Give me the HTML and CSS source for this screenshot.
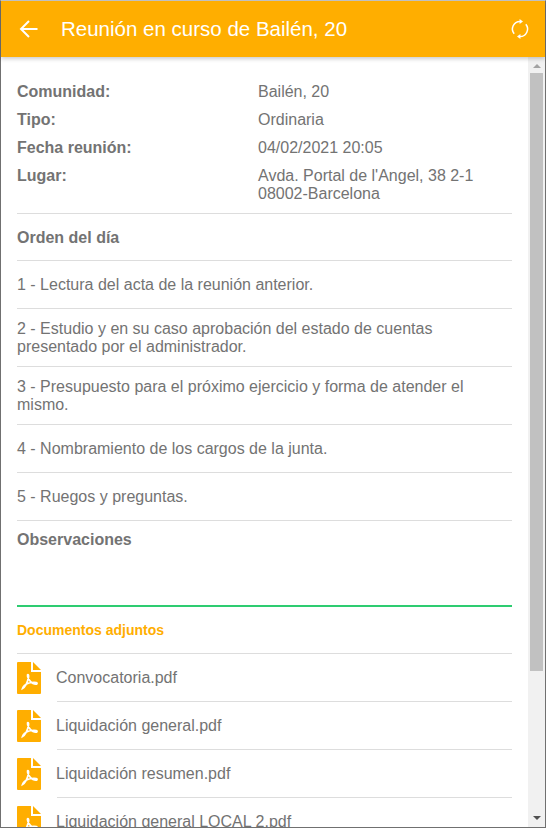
FILE: index.html
```html
<!DOCTYPE html>
<html lang="es">
<head>
    <meta charset="UTF-8">
    <meta name="viewport" content="width=device-width, initial-scale=1.0">
    <title>Reunión en curso</title>
    <link rel="stylesheet" href="styles.css">
</head>
<body>
    <div class="window">
        <!-- Header -->
        <div class="header">
            <svg class="back-icon" viewBox="0 0 20 20" width="20" height="20">
                <path d="M18.5 10H2.5M10 2L2 10l8 8" fill="none" stroke="#fff" stroke-width="2"/>
            </svg>
            <h1>Reunión en curso de Bailén, 20</h1>
            <svg class="sync-icon" viewBox="0 0 20 20" width="20" height="20">
                <path d="M4.2 14.8A7.5 7.5 0 0 1 10 2.5M15.8 5.2A7.5 7.5 0 0 1 10 17.5" fill="none" stroke="#fff" stroke-width="1.5"/>
                <path d="M9.6 0L13 2.5 9.6 5zM10.4 15L7 17.5 10.4 20z" fill="#fff"/>
            </svg>
        </div>

        <div class="body-row">
            <!-- Scrolling content -->
            <div class="content">
                <div class="info">
                    <div class="info-row"><b>Comunidad:</b><span>Bailén, 20</span></div>
                    <div class="info-row"><b>Tipo:</b><span>Ordinaria</span></div>
                    <div class="info-row"><b>Fecha reunión:</b><span>04/02/2021 20:05</span></div>
                    <div class="info-row"><b>Lugar:</b><span>Avda. Portal de l'Angel, 38 2-1<br>08002-Barcelona</span></div>
                </div>
                <h2 class="agenda-title">Orden del día</h2>
                <div class="agenda-item">1 - Lectura del acta de la reunión anterior.</div>
                <div class="agenda-item">2 - Estudio y en su caso aprobación del estado de cuentas presentado por el administrador.</div>
                <div class="agenda-item">3 - Presupuesto para el próximo ejercicio y forma de atender el mismo.</div>
                <div class="agenda-item">4 - Nombramiento de los cargos de la junta.</div>
                <div class="agenda-item">5 - Ruegos y preguntas.</div>
                <h2 class="notes-title">Observaciones</h2>
                <h3 class="docs-title">Documentos adjuntos</h3>
                <div class="docs">
                    <div class="doc">
                        <svg class="pdf-icon" viewBox="0 0 24 32" width="24" height="32"><use href="#pdf"/></svg>
                        <span>Convocatoria.pdf</span>
                    </div>
                    <div class="doc">
                        <svg class="pdf-icon" viewBox="0 0 24 32" width="24" height="32"><use href="#pdf"/></svg>
                        <span>Liquidación general.pdf</span>
                    </div>
                    <div class="doc">
                        <svg class="pdf-icon" viewBox="0 0 24 32" width="24" height="32"><use href="#pdf"/></svg>
                        <span>Liquidación resumen.pdf</span>
                    </div>
                    <div class="doc">
                        <svg class="pdf-icon" viewBox="0 0 24 32" width="24" height="32"><use href="#pdf"/></svg>
                        <span>Liquidación general LOCAL 2.pdf</span>
                    </div>
                </div>
            </div>

            <!-- Scrollbar -->
            <div class="scrollbar">
                <div class="arrow-up"></div>
                <div class="thumb"></div>
                <div class="arrow-down"></div>
            </div>
        </div>
    </div>

    <svg class="defs" width="0" height="0">
        <symbol id="pdf" viewBox="0 0 24 32">
            <path d="M1 0H14V10H24V31a1 1 0 0 1-1 1H1a1 1 0 0 1-1-1V1a1 1 0 0 1 1-1z" fill="#ffae00"/>
            <path d="M16 0L24 8H16z" fill="#ffae00"/>
            <path d="M5.5 26.5C8 25 10.5 20 11.5 15.5C12 13 11 12 10.5 13C10 15 13 20 16 21.5C18 22.5 20.5 22.5 20 21C19.5 20 15 20 12 21C9 22 6 24.5 5.5 26.5z" fill="none" stroke="#fff" stroke-width="1.7"/>
        </symbol>
    </svg>
</body>
</html>
```

FILE: styles.css
```css
html, body {
    margin: 0;
    padding: 0;
    height: 100%;
}

body {
    font-family: "Liberation Sans", Arial, sans-serif;
    background-color: #fff;
    color: #737373;
    overflow: hidden;
}

.window {
    box-sizing: border-box;
    height: 828px;
    display: flex;
    flex-direction: column;
    border: 1px solid #707070;
    border-top: 1px solid #c4c4c4;
}

/* Header */
.header {
    flex: none;
    height: 56px;
    display: flex;
    align-items: center;
    background-color: #ffae00;
    box-shadow: 0 2px 4px rgba(0, 0, 0, 0.2);
    position: relative;
    z-index: 1;
}

.back-icon {
    margin-left: 18px;
}

.header h1 {
    flex: 1;
    margin: 0 0 0 22px;
    font-size: 20.5px;
    font-weight: normal;
    color: #fff;
}

.sync-icon {
    margin-right: 15px;
}

.body-row {
    flex: 1;
    min-height: 0;
    display: flex;
}

/* Main content */
.content {
    flex: 1;
    min-width: 0;
    overflow: hidden;
    padding: 0 16px;
    font-size: 16px;
    line-height: 18px;
}

.info {
    padding: 26px 0 0;
}

.info-row {
    display: flex;
    margin-bottom: 10px;
}

.info-row b {
    width: 241px;
    flex: none;
}

.agenda-title,
.notes-title {
    margin: 0;
    font-size: 16px;
    line-height: 18px;
    font-weight: bold;
    border-top: 1px solid #ddd;
}

.agenda-title {
    padding: 15px 0 13px;
}

.agenda-item {
    box-sizing: border-box;
    min-height: 48px;
    display: flex;
    align-items: center;
    padding: 11px 0 10px;
    border-top: 1px solid #ddd;
}

.notes-title {
    padding: 10px 0 56px;
    border-bottom: 2px solid #2ecc71;
}

.docs-title {
    margin: 0;
    padding: 15px 0 14px;
    font-size: 14px;
    line-height: 17px;
    font-weight: bold;
    color: #ffae00;
}

.docs {
    border-top: 1px solid #ddd;
}

.doc {
    height: 47px;
    display: flex;
    align-items: center;
    position: relative;
}

.doc + .doc::before {
    content: "";
    position: absolute;
    top: -1px;
    left: 40px;
    right: 0;
    border-top: 1px solid #ddd;
}

.doc + .doc {
    margin-top: 1px;
}

.pdf-icon {
    flex: none;
    margin-right: 15px;
}

/* Fake scrollbar, the real one does not show up in the shot */
.scrollbar {
    flex: none;
    width: 17px;
    display: flex;
    flex-direction: column;
    align-items: center;
    background-color: #f1f1f1;
}

.arrow-up {
    margin-top: 7px;
    border: 4px solid transparent;
    border-top: 0;
    border-bottom: 4px solid #a3a3a3;
}

.thumb {
    width: 13px;
    height: 598px;
    margin-top: 5px;
    background-color: #c1c1c1;
}

.arrow-down {
    margin-top: auto;
    margin-bottom: 7px;
    border: 4px solid transparent;
    border-bottom: 0;
    border-top: 4px solid #505050;
}

.defs {
    position: absolute;
}
```
